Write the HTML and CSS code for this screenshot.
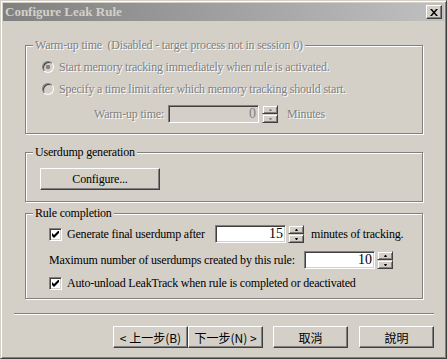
FILE: index.html
```html
<!DOCTYPE html>
<html lang="en">
<head>
    <meta charset="UTF-8">
    <meta name="viewport" content="width=device-width, initial-scale=1.0">
    <title>Configure Leak Rule</title>
    <link rel="stylesheet" href="styles.css">
</head>
<body>
    <div class="window">
        <div class="titlebar">
            <span class="title">Configure Leak Rule</span>
            <button class="close-btn">
                <svg width="8" height="7" viewBox="0 0 8 7"><path d="M0 0h2l2 2.5L6 0h2L5 3.5 8 7H6L4 4.5 2 7H0l3-3.5z" fill="#000"/></svg>
            </button>
        </div>
        <div class="content">
            <fieldset class="group disabled">
                <legend>Warm-up time&nbsp; (Disabled - target process not in session 0)</legend>
                <div class="group-body warmup-body">
                    <div class="row radio-row">
                        <span class="radio checked"></span>
                        <span>Start memory tracking immediately when rule is activated.</span>
                    </div>
                    <div class="row radio-row">
                        <span class="radio"></span>
                        <span>Specify a time limit after which memory tracking should start.</span>
                    </div>
                    <div class="row field-row warmup-row">
                        <span class="warmup-label">Warm-up time:</span>
                        <span class="edit edit-warmup">0</span>
                        <span class="spin">
                            <span class="spin-btn spin-up"></span>
                            <span class="spin-btn spin-down"></span>
                        </span>
                        <span class="unit">Minutes</span>
                    </div>
                </div>
            </fieldset>

            <fieldset class="group group-userdump">
                <legend>Userdump generation</legend>
                <div class="group-body userdump-body">
                    <button class="push-btn configure-btn">Configure...</button>
                </div>
            </fieldset>

            <fieldset class="group group-completion">
                <legend>Rule completion</legend>
                <div class="group-body completion-body">
                    <div class="row field-row">
                        <span class="checkbox"><svg width="7" height="7" viewBox="0 0 7 7"><polygon points="0,2 2,4 7,-1 7,2 2,7 0,5" fill="#000"/></svg></span>
                        <span class="check-label gen-label">Generate final userdump after</span>
                        <span class="edit edit-minutes">15</span>
                        <span class="spin">
                            <span class="spin-btn spin-up"></span>
                            <span class="spin-btn spin-down"></span>
                        </span>
                        <span class="unit unit-tracking">minutes of tracking.</span>
                    </div>
                    <div class="row field-row max-row">
                        <span class="max-label">Maximum number of userdumps created by this rule:</span>
                        <span class="edit edit-max">10</span>
                        <span class="spin">
                            <span class="spin-btn spin-up"></span>
                            <span class="spin-btn spin-down"></span>
                        </span>
                    </div>
                    <div class="row auto-row">
                        <span class="checkbox"><svg width="7" height="7" viewBox="0 0 7 7"><polygon points="0,2 2,4 7,-1 7,2 2,7 0,5" fill="#000"/></svg></span>
                        <span class="check-label">Auto-unload LeakTrack when rule is completed or deactivated</span>
                    </div>
                </div>
            </fieldset>

            <div class="separator"></div>

            <div class="button-row">
                <button class="push-btn">&lt; 上一步(B)</button>
                <button class="push-btn">下一步(N) &gt;</button>
                <button class="push-btn btn-cancel">取消</button>
                <button class="push-btn btn-help">說明</button>
            </div>
        </div>
    </div>
</body>
</html>
```

FILE: styles.css
```css
body {
    margin: 0;
    background-color: #d4d0c8;
    font-family: "Liberation Serif", "Times New Roman", serif;
    font-size: 12px;
    letter-spacing: -0.2px;
    color: black;
}
.window {
    box-sizing: border-box;
    width: 447px;
    height: 359px;
    padding: 2px;
    background-color: #d4d0c8;
    border: 1px solid;
    border-color: #d4d0c8 #404040 #404040 #d4d0c8;
    box-shadow: inset 1px 1px 0 #fff, inset -1px -1px 0 #808080;
}
.titlebar {
    display: flex;
    align-items: center;
    justify-content: space-between;
    height: 18px;
    padding: 0 2px;
    background: linear-gradient(to right, #808080, #c0c0c0);
}
.title {
    font-weight: bold;
    font-size: 13px;
    letter-spacing: 0;
    color: #d4d0c8;
}
.close-btn {
    display: flex;
    align-items: center;
    justify-content: center;
    box-sizing: border-box;
    width: 16px;
    height: 14px;
    padding: 0;
    background-color: #d4d0c8;
    border: 1px solid;
    border-color: #fff #404040 #404040 #fff;
    box-shadow: inset -1px -1px 0 #808080;
}
.content {
    padding-top: 17px;
}
.group {
    box-sizing: border-box;
    width: 398px;
    min-width: 0;
    margin: 0 0 0 22px;
    padding: 0;
    border: 1px solid #808080;
    box-shadow: inset 1px 1px 0 #fff, 1px 1px 0 #fff;
}
.group legend {
    margin-left: 7px;
    padding: 0 2px;
    line-height: 14px;
    background-color: #d4d0c8;
}
.group-userdump {
    margin-top: 11px;
}
.group-completion {
    margin-top: 4px;
}
.disabled {
    color: #808080;
    text-shadow: 1px 1px 0 #fff;
}
.warmup-body {
    padding: 4px 0 10px 16px;
}
.userdump-body {
    padding: 9px 0 11px 14px;
}
.completion-body {
    padding: 5px 0 7px 23px;
}
.row {
    display: flex;
    align-items: center;
}
.radio-row {
    height: 22px;
}
.field-row {
    height: 18px;
}
.warmup-row {
    margin-top: 5px;
}
.max-row {
    margin-top: 8px;
}
.auto-row {
    height: 16px;
    margin-top: 6px;
}
.radio {
    display: flex;
    align-items: center;
    justify-content: center;
    box-sizing: border-box;
    width: 12px;
    height: 12px;
    margin-right: 5px;
    border-radius: 50%;
    border: 1px solid;
    border-color: #808080 #fff #fff #808080;
    box-shadow: inset 1px 1px 0 #404040, inset -1px -1px 0 #d4d0c8;
    background-color: #d4d0c8;
}
.radio.checked::after {
    content: "";
    width: 4px;
    height: 4px;
    border-radius: 1px;
    background-color: #808080;
    box-shadow: none;
}
.warmup-label {
    width: 74px;
    margin-left: 52px;
}
.edit {
    box-sizing: border-box;
    height: 18px;
    padding: 0 2px;
    border: 1px solid;
    border-color: #808080 #fff #fff #808080;
    box-shadow: inset 1px 1px 0 #404040, inset -1px -1px 0 #d4d0c8;
    background-color: #fff;
    font-size: 14px;
    line-height: 16px;
    letter-spacing: 0;
    text-align: right;
}
.edit-warmup {
    width: 91px;
    margin-right: 3px;
    background-color: #d4d0c8;
    text-shadow: none;
}
.edit-minutes,
.edit-max {
    width: 71px;
    margin-right: 2px;
}
.spin {
    display: flex;
    flex-direction: column;
    width: 16px;
    height: 18px;
}
.spin-btn {
    display: flex;
    align-items: center;
    justify-content: center;
    box-sizing: border-box;
    height: 9px;
    border: 1px solid;
    border-color: #d4d0c8 #404040 #404040 #d4d0c8;
    box-shadow: inset 1px 1px 0 #fff, inset -1px -1px 0 #808080;
    background-color: #d4d0c8;
}
.spin-btn::after {
    content: "";
    width: 1px;
    border-left: 1px solid transparent;
    border-right: 1px solid transparent;
}
.spin-up::after {
    border-bottom: 2px solid #000;
}
.spin-down::after {
    border-top: 2px solid #000;
}
.disabled .spin-up::after {
    border-bottom-color: #808080;
}
.disabled .spin-down::after {
    border-top-color: #808080;
}
.unit {
    margin-left: 9px;
}
.unit-tracking {
    margin-left: 7px;
}
.checkbox {
    display: flex;
    align-items: center;
    justify-content: center;
    box-sizing: border-box;
    width: 13px;
    height: 13px;
    border: 1px solid;
    border-color: #808080 #fff #fff #808080;
    box-shadow: inset 1px 1px 0 #404040, inset -1px -1px 0 #d4d0c8;
    background-color: #fff;
}
.check-label {
    margin-left: 5px;
}
.gen-label {
    width: 148px;
}
.max-label {
    width: 255px;
}
.push-btn {
    box-sizing: border-box;
    width: 75px;
    height: 22px;
    padding: 0;
    background-color: #d4d0c8;
    border: 1px solid;
    border-color: #fff #404040 #404040 #fff;
    box-shadow: inset -1px -1px 0 #808080;
    font-family: "Noto Sans CJK TC", sans-serif;
    font-size: 12px;
    letter-spacing: 0;
    color: #000;
}
.configure-btn {
    width: 120px;
    font-family: "Liberation Serif", "Times New Roman", serif;
    letter-spacing: -0.2px;
}
.separator {
    width: 420px;
    margin: 14px 0 0 11px;
    border-top: 1px solid #808080;
    border-bottom: 1px solid #fff;
}
.button-row {
    display: flex;
    justify-content: flex-end;
    margin-top: 11px;
    padding-right: 10px;
}
.btn-cancel {
    margin-left: 10px;
}
.btn-help {
    margin-left: 11px;
}
```
